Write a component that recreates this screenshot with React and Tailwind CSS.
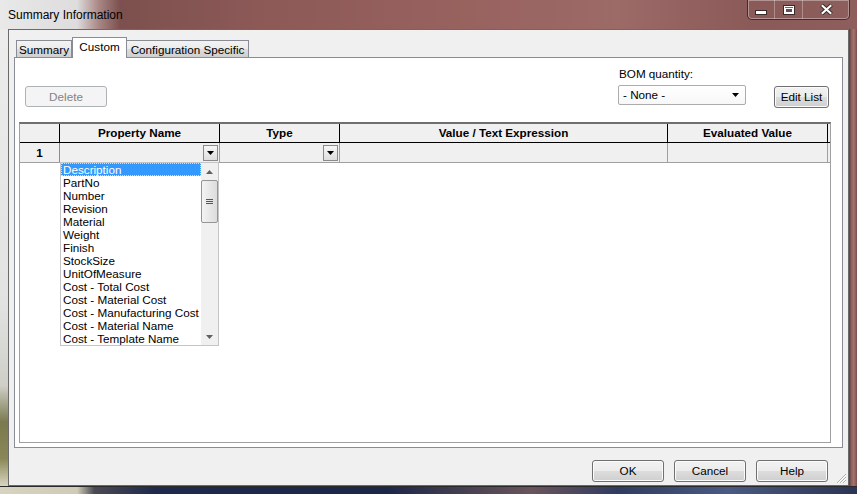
import React from 'react';

const items = [
  'Description', 'PartNo', 'Number', 'Revision', 'Material', 'Weight', 'Finish',
  'StockSize', 'UnitOfMeasure', 'Cost - Total Cost', 'Cost - Material Cost',
  'Cost - Manufacturing Cost', 'Cost - Material Name', 'Cost - Template Name',
];

const Arrow = ({ up, color = '#000' }) => (
  <svg width="7" height="4" viewBox="0 0 7 4">
    {up ? <path d="M0 4 L3.5 0 L7 4 Z" fill={color} /> : <path d="M0 0 L7 0 L3.5 4 Z" fill={color} />}
  </svg>
);

const Button = ({ children, className = '' }) => (
  <div className={`flex items-center justify-center rounded-[3px] border border-[#707070] bg-[linear-gradient(to_bottom,#f2f2f2_0%,#ebebeb_50%,#dddddd_50%,#cfcfcf_100%)] shadow-[inset_0_0_0_1px_#fbfbfb] text-[11.7px] leading-none text-black ${className}`}>
    {children}
  </div>
);

const CellDrop = () => (
  <div className="flex h-[16px] w-[15px] items-center justify-center border border-[#8a8a8a] bg-[linear-gradient(to_bottom,#f6f6f6,#dedede)]">
    <Arrow />
  </div>
);

export default function App() {
  return (
    <div className="flex h-[494px] w-[857px] flex-col overflow-hidden font-['Liberation_Sans',Arial,sans-serif] text-black">
      {/* title bar */}
      <div className="flex h-[29px] items-start justify-between bg-[linear-gradient(to_right,#e9e9e9_0%,#dedcdc_9%,#a98886_11.5%,#7c504e_14%,#8c5957_30%,#98625f_55%,#9c6a67_72%,#8a5a58_88%,#8e5e5c_100%)]">
        <span className="pl-[8px] pt-[8px] text-[12px] leading-[14px]">Summary Information</span>
        <div className="mr-[7px] flex h-[20px] rounded-b-[5px] border border-t-0 border-[rgba(50,25,25,0.75)] shadow-[inset_0_0_0_1px_rgba(255,255,255,0.35)]">
          <div className="flex w-[27px] items-center justify-center border-r border-[rgba(255,255,255,0.3)] pt-[6px]">
            <svg width="12" height="5" viewBox="0 0 12 5">
              <rect x="0.5" y="0.5" width="11" height="4" fill="#fff" stroke="#3b2a2a" />
            </svg>
          </div>
          <div className="flex w-[28px] items-center justify-center border-r border-[rgba(255,255,255,0.3)]">
            <svg width="12" height="10" viewBox="0 0 12 10">
              <rect x="0.5" y="0.5" width="11" height="9" fill="none" stroke="#3b2a2a" />
              <rect x="1.5" y="1.5" width="9" height="7" fill="none" stroke="#fff" strokeWidth="1" />
              <rect x="2.5" y="3.5" width="7" height="4" fill="none" stroke="#fff" strokeWidth="1" />
              <rect x="3" y="4" width="6" height="3" fill="#6b4a4a" />
            </svg>
          </div>
          <div className="flex w-[46px] items-center justify-center">
            <svg width="13" height="11" viewBox="0 0 13 11">
              <path d="M1.5 1 L11.5 10 M11.5 1 L1.5 10" stroke="#3b2a2a" strokeWidth="4" />
              <path d="M1.8 1.3 L11.2 9.7 M11.2 1.3 L1.8 9.7" stroke="#fff" strokeWidth="2.2" />
            </svg>
          </div>
        </div>
      </div>

      <div className="flex h-[457px]">
        <div className="w-[8px] bg-[linear-gradient(to_bottom,#ececec_0%,#e2e2e2_60%,#cfcfc8_78%,#7b7a4e_86%,#8a8756_94%,#d8d5c2_100%)]" />

        {/* client */}
        <div className="relative flex w-[841px] flex-col border border-[#6a6a6a] bg-[#f0f0f0]">
          <div className="px-[5px] pt-[7px]">
            {/* tabs */}
            <div className="flex h-[20px] items-end pl-[2px] text-[11.7px]">
              <div className="flex h-[17px] w-[56px] items-center justify-center border border-b-0 border-[#898c95] bg-[linear-gradient(to_bottom,#f3f3f3_0%,#ebebeb_50%,#dddddd_50%,#cfcfcf_100%)] pt-[1px]">
                Summary
              </div>
              <div className="relative z-10 mb-[-1px] flex h-[21px] w-[55px] items-center justify-center border border-b-0 border-[#898c95] bg-white pb-[2px]">
                Custom
              </div>
              <div className="flex h-[17px] w-[122px] items-center justify-center border border-b-0 border-l-0 border-[#898c95] bg-[linear-gradient(to_bottom,#f3f3f3_0%,#ebebeb_50%,#dddddd_50%,#cfcfcf_100%)] pt-[1px]">
                Configuration Specific
              </div>
            </div>

            {/* panel */}
            <div className="h-[391px] border border-[#898c95] bg-white">
              <div className="flex items-start pl-[10px] pr-[13px] pt-[9px]">
                <div className="mt-[19px] flex h-[21px] w-[82px] items-center justify-center rounded-[3px] border border-[#adb2b5] bg-[#f4f4f4] text-[11.7px] text-[#838383]">
                  Delete
                </div>
                <div className="ml-auto w-[128px]">
                  <div className="ml-[1px] text-[11.7px] leading-[14px]">BOM quantity:</div>
                  <div className="mt-[4px] flex h-[20px] items-center justify-between rounded-[2px] border border-[#acacac] bg-[linear-gradient(to_bottom,#ffffff,#f7f7f7)] pl-[4px] pr-[6px] text-[11.7px]">
                    <span>- None -</span>
                    <Arrow />
                  </div>
                </div>
                <Button className="ml-[28px] mt-[19px] h-[22px] w-[55px]">Edit List</Button>
              </div>

              {/* table */}
              <div className="relative ml-[4px] mt-[14px] h-[321px] w-[812px] border border-t-2 border-[#a0a0a0] border-t-[#6f6f6f] bg-white text-[11.7px]">
                <div className="flex h-[19px] border-b border-black bg-[#f0f0f0] font-bold">
                  <div className="w-[40px] border-r border-black" />
                  <div className="flex w-[160px] items-center justify-center border-r border-black">Property Name</div>
                  <div className="flex w-[120px] items-center justify-center border-r border-black">Type</div>
                  <div className="flex w-[328px] items-center justify-center border-r border-black">Value / Text Expression</div>
                  <div className="flex w-[160px] items-center justify-center border-r border-black">Evaluated Value</div>
                </div>
                <div className="flex h-[20px] border-b border-[#a0a0a0] bg-[#f0f0f0]">
                  <div className="flex w-[40px] items-center justify-center border-r border-[#8c8c8c] font-bold">1</div>
                  <div className="flex w-[160px] items-center justify-end border-r border-[#a0a0a0] pr-[1px]"><CellDrop /></div>
                  <div className="flex w-[120px] items-center justify-end border-r border-[#a0a0a0] pr-[1px]"><CellDrop /></div>
                  <div className="w-[328px] border-r border-[#a0a0a0]" />
                  <div className="w-[160px] border-r border-[#a0a0a0]" />
                </div>

                {/* dropdown list */}
                <div className="absolute left-[40px] top-[38px] z-20 flex h-[184px] w-[159px] border border-[#c4c4c4] bg-white">
                  <div className="flex-1">
                    {items.map((it, i) => (
                      <div
                        key={it}
                        className={
                          i === 0
                            ? 'h-[13px] border border-dotted border-[#ffd89a] bg-[#3399ff] pl-[1px] leading-[11px] text-white'
                            : 'h-[13px] whitespace-nowrap pl-[2px] leading-[13px]'
                        }
                      >
                        {it}
                      </div>
                    ))}
                  </div>
                  <div className="flex w-[17px] flex-col bg-[#f0f0f0]">
                    <div className="flex h-[17px] items-center justify-center"><Arrow up color="#606060" /></div>
                    <div className="flex h-[43px] items-center justify-center rounded-[2px] border border-[#959595] bg-[linear-gradient(to_right,#f3f3f3,#dcdcdc)]">
                      <svg width="7" height="6" viewBox="0 0 7 6">
                        <path d="M0 0.5 H7 M0 2.5 H7 M0 4.5 H7" stroke="#555" strokeWidth="1" />
                      </svg>
                    </div>
                    <div className="flex-1" />
                    <div className="flex h-[17px] items-center justify-center"><Arrow color="#606060" /></div>
                  </div>
                </div>
              </div>
            </div>
          </div>

          {/* bottom buttons */}
          <div className="mr-[20px] mt-[12px] flex justify-end gap-[10px]">
            <Button className="h-[22px] w-[72px]">OK</Button>
            <Button className="h-[22px] w-[72px]">Cancel</Button>
            <Button className="h-[22px] w-[72px]">Help</Button>
          </div>

          <svg className="absolute bottom-[1px] right-[1px]" width="12" height="12" viewBox="0 0 12 12">
            <path d="M11 2 L2 11 M11 5 L5 11 M11 8 L8 11" stroke="#b0b0b0" strokeWidth="1" />
            <path d="M11 3 L3 11 M11 6 L6 11 M11 9 L9 11" stroke="#ffffff" strokeWidth="1" />
          </svg>
        </div>

        <div className="w-[8px] bg-[linear-gradient(to_right,#5d3c3b_0%,#8f5f5d_30%,#a57370_60%,#7a4e4c_100%)]" />
      </div>

      <div className="h-[8px] border-t border-[#2a2a2a] bg-[linear-gradient(to_right,#d6d3c0_0%,#cfcbb6_9%,#4a4a52_11%,#1e2a4c_18%,#1b2747_45%,#6b545c_62%,#2f3c62_72%,#4a5a82_85%,#2b3452_100%)]" />
    </div>
  );
}
